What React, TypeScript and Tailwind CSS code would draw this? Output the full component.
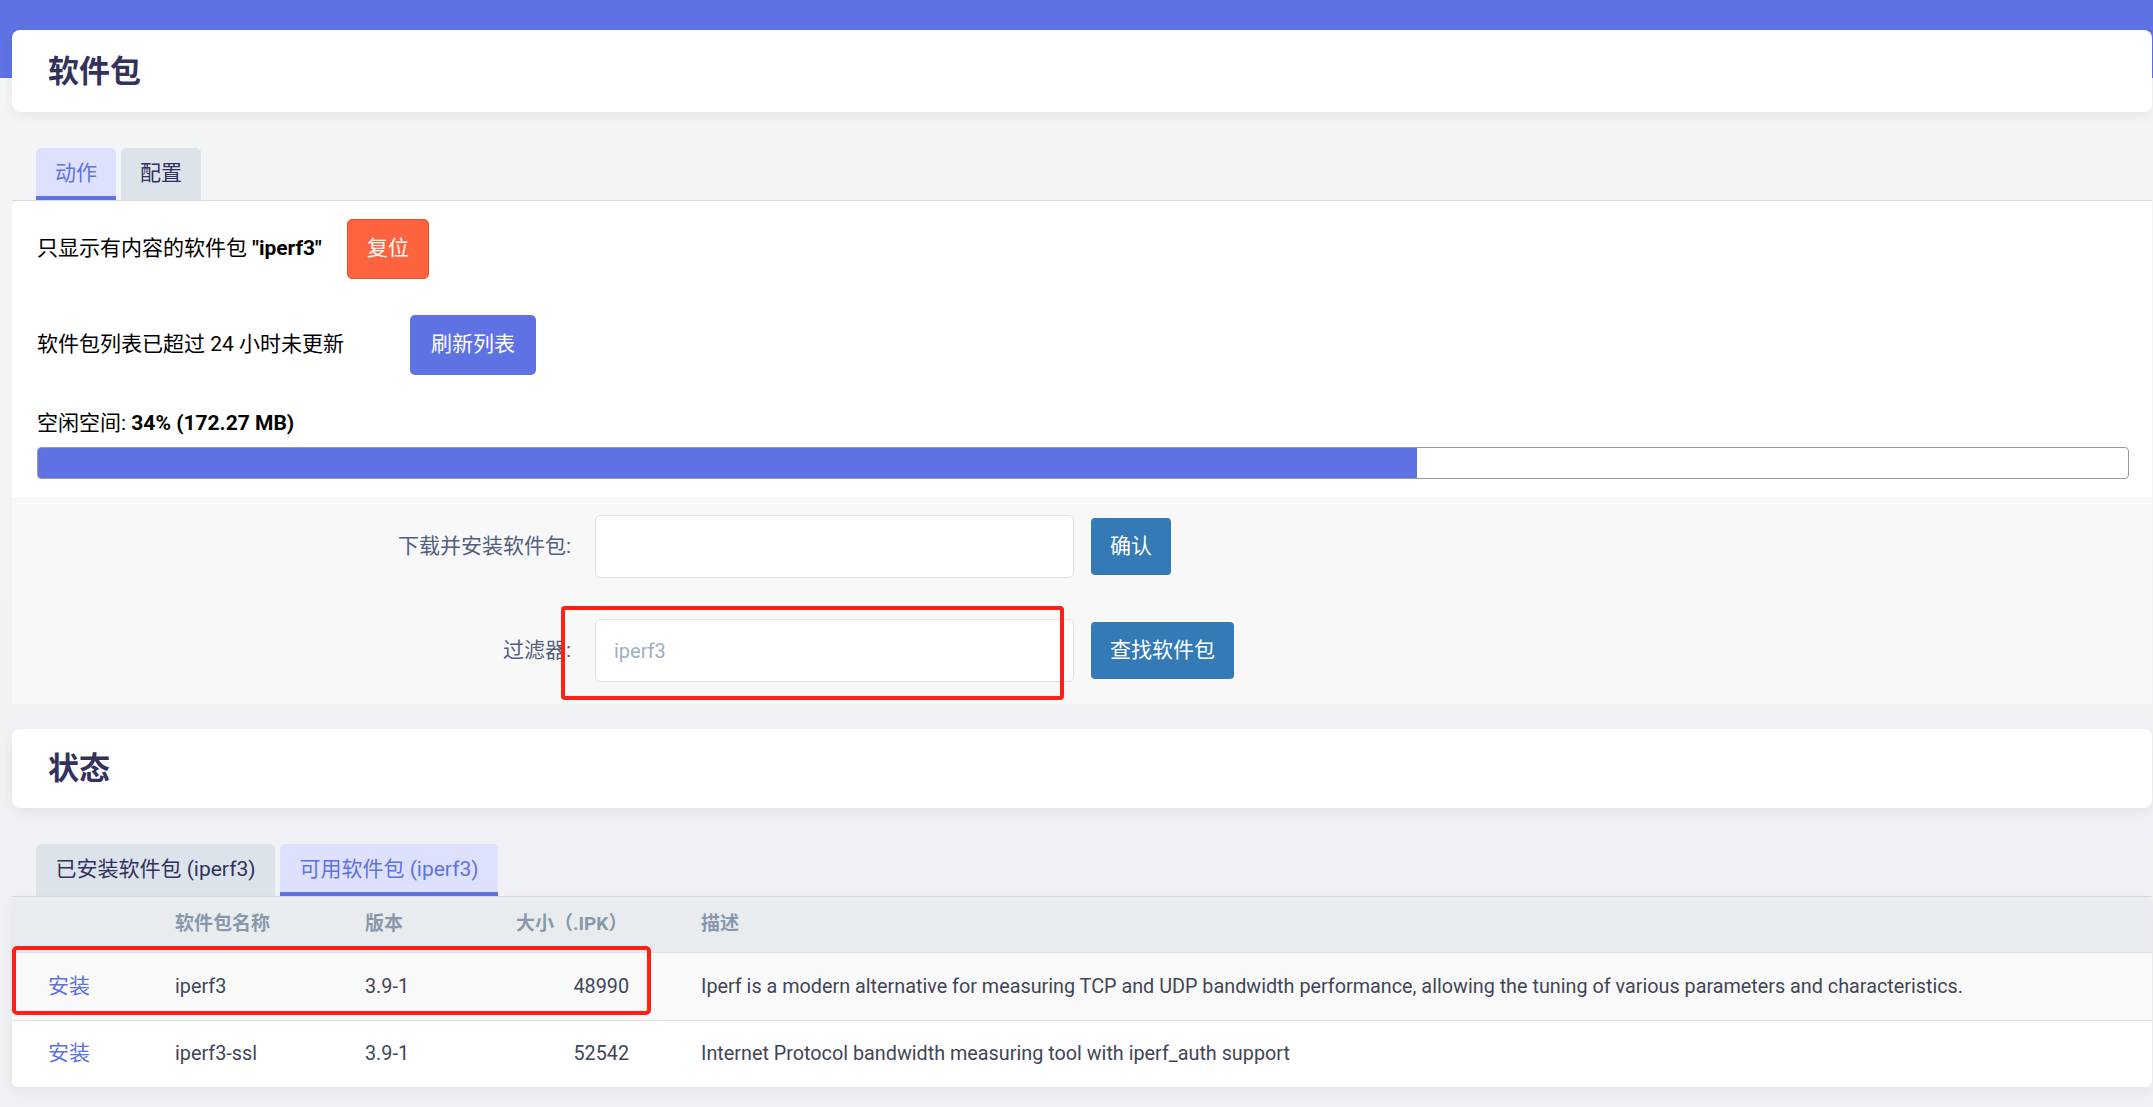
import React from "react";

const FONT = { fontFamily: 'Roboto, "Noto Sans CJK SC", "Noto Sans", sans-serif' };

function Tab({ label, active, w }: { label: string; active?: boolean; w: string }) {
  return (
    <div
      className={
        "h-[52px] flex items-center justify-center rounded-t-[5px] text-[21px] " +
        w +
        " " +
        (active
          ? "bg-[#dde1fd] text-[#5e72e4] border-b-[4px] border-[#5e72e4] pt-[4px]"
          : "bg-[#dce3ea] text-[#32325d]")
      }
    >
      {label}
    </div>
  );
}

export default function App() {
  return (
    <div className="min-h-screen bg-gradient-to-b from-[#f4f5f7] to-[#eef0f3] pb-[20px]" style={FONT}>
      <div className="h-[78px] bg-[#5e72e4]" />
      <div className="-mt-[48px] pl-[12px] pr-[1px]">
        {/* Header card */}
        <div className="h-[82px] rounded-[8px] bg-white shadow-[0_4px_12px_rgba(0,0,0,0.06)] flex items-center px-[36px]">
          <h2 className="text-[31px] font-bold text-[#32325d] leading-none">软件包</h2>
        </div>

        {/* Tabs */}
        <div className="mt-[36px] pl-[24px] flex gap-[5px] border-b border-[#d9dde2]">
          <Tab label="动作" active w="w-[80px]" />
          <Tab label="配置" w="w-[80px]" />
        </div>

        {/* White panel */}
        <div className="bg-white rounded-tl-[6px] pl-[25px] pr-[23px] pt-[18px] pb-[18px] text-[21px] text-black">
          <div className="flex items-center h-[60px]">
            <span className="w-[310px] whitespace-nowrap">
              只显示有内容的软件包 <b className="font-bold">"iperf3"</b>
            </span>
            <button className="h-[60px] w-[82px] rounded-[5px] bg-[#fe6340] border border-[#e4502e] text-white text-[21px]">
              复位
            </button>
          </div>
          <div className="flex items-center h-[60px] mt-[36px]">
            <span className="w-[373px] whitespace-nowrap">软件包列表已超过 24 小时未更新</span>
            <button className="h-[60px] w-[126px] rounded-[5px] bg-[#5e72e4] text-white text-[21px]">刷新列表</button>
          </div>
          <div className="mt-[35px] leading-[26px]">
            空闲空间: <b className="font-bold">34% (172.27 MB)</b>
          </div>
          <div className="mt-[11px] h-[32px] rounded-[4px] border border-[#999999] bg-white overflow-hidden">
            <div className="h-full bg-[#5e72e4]" style={{ width: "66%" }} />
          </div>
        </div>

        {/* Gray form section */}
        <div className="bg-[#f8f8f8] pt-[18px] pb-[22px] text-[21px]">
          <div className="flex items-center h-[63px]">
            <label className="w-[559px] text-right text-[#525f7f]">下载并安装软件包:</label>
            <input className="ml-[24px] w-[479px] h-[63px] rounded-[5px] border border-[#dfe3e8] bg-white outline-none" />
            <button className="ml-[17px] w-[80px] h-[57px] rounded-[4px] bg-[#337ab7] text-white text-[21px]">确认</button>
          </div>
          <div className="flex items-center h-[63px] mt-[41px]">
            <label className="w-[559px] text-right text-[#525f7f]">过滤器:</label>
            <div className="relative ml-[24px]">
              <input
                className="w-[479px] h-[63px] rounded-[5px] border border-[#dfe3e8] bg-white outline-none pl-[18px] text-[#a0aec0] text-[20px]"
                defaultValue="iperf3"
              />
              <div className="absolute left-[-34px] top-[-13px] w-[503px] h-[94px] border-[4px] border-[#ff1f14] rounded-[4px] pointer-events-none" />
            </div>
            <button className="ml-[17px] w-[143px] h-[57px] rounded-[4px] bg-[#337ab7] text-white text-[21px]">查找软件包</button>
          </div>
        </div>

        {/* Status card */}
        <div className="mt-[25px] h-[79px] rounded-[8px] bg-white shadow-[0_4px_12px_rgba(0,0,0,0.06)] flex items-center px-[36px]">
          <h2 className="text-[31px] font-bold text-[#32325d] leading-none">状态</h2>
        </div>

        {/* Tabs */}
        <div className="mt-[36px] pl-[24px] flex gap-[5px] border-b border-[#d9dde2]">
          <Tab label="已安装软件包 (iperf3)" w="w-[239px]" />
          <Tab label="可用软件包 (iperf3)" active w="w-[218px]" />
        </div>

        {/* Table */}
        <div className="relative rounded-[6px] shadow-[0_4px_12px_rgba(0,0,0,0.05)]">
          <div className="grid grid-cols-[163px_190px_151px_185px_1fr] h-[55px] items-center bg-[#e9ecef] rounded-t-[6px] text-[19px] font-bold text-[#8898aa]">
            <div />
            <div>软件包名称</div>
            <div>版本</div>
            <div className="whitespace-nowrap">大小（.IPK）</div>
            <div>描述</div>
          </div>
          <div className="grid grid-cols-[163px_190px_151px_185px_1fr] h-[68px] items-center bg-[#f9f9f9] border-t border-[#dee2e6] text-[19.8px] text-[#414657]">
            <div className="pl-[36px] text-[#5e72e4] text-[21px]">安装</div>
            <div>iperf3</div>
            <div>3.9-1</div>
            <div className="text-right pr-[72px]">48990</div>
            <div className="whitespace-nowrap">
              Iperf is a modern alternative for measuring TCP and UDP bandwidth performance, allowing the tuning of various parameters and characteristics.
            </div>
          </div>
          <div className="grid grid-cols-[163px_190px_151px_185px_1fr] h-[67px] items-center bg-white border-t border-[#dee2e6] rounded-b-[6px] text-[19.8px] text-[#414657]">
            <div className="pl-[36px] text-[#5e72e4] text-[21px]">安装</div>
            <div>iperf3-ssl</div>
            <div>3.9-1</div>
            <div className="text-right pr-[72px]">52542</div>
            <div className="whitespace-nowrap">Internet Protocol bandwidth measuring tool with iperf_auth support</div>
          </div>
          <div className="absolute left-0 top-[49px] w-[639px] h-[69px] border-[4px] border-[#ff1f14] rounded-[5px] pointer-events-none" />
        </div>
      </div>
    </div>
  );
}
